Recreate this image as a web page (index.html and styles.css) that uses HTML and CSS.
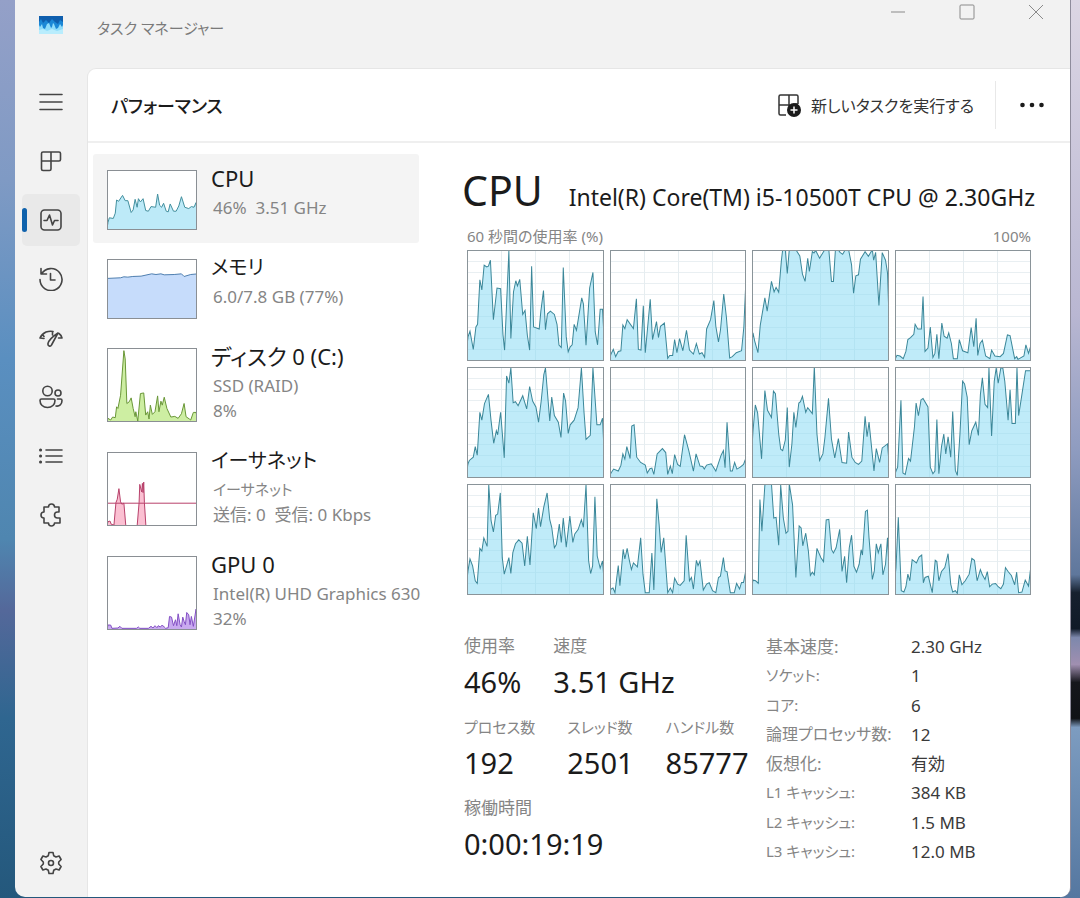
FILE: index.html
```
<!DOCTYPE html>
<html lang="ja">
<head>
  <meta charset="UTF-8">
  <meta name="viewport" content="width=device-width, initial-scale=1">
  <title>タスク マネージャー</title>
  <link rel="stylesheet" href="styles.css">
</head>
<body>
  <div class="window">
    <header class="titlebar">
      <svg class="app-icon" viewBox="0 0 24 18">
        <rect width="24" height="18" fill="#8fdcfb"/>
        <path d="M0 0h24v9l-1 2-2-3-2 4-2 1-2-5-1-1-1 4-1 1-2-5-2 1-2 5-2-1-1-4-2 3-1-2z" fill="#1b87d6"/>
        <path d="M0 0h24v6l-3-2-2 4-3-2-3-3-3 4-3-3-3 3-2-4-2 3z" fill="#0f5fae"/>
        <path d="M0 14l4-1 4 2 5-2 5 2 6-2v5H0z" fill="#b9edfd"/>
      </svg>
      <span class="app-title">タスク マネージャー</span>
      <div class="window-controls">
        <button aria-label="最小化"><svg viewBox="0 0 16 16"><path d="M1 8h14"/></svg></button>
        <button aria-label="最大化"><svg viewBox="0 0 16 16"><rect x="1" y="1" width="14" height="14" rx="1"/></svg></button>
        <button aria-label="閉じる"><svg viewBox="0 0 16 16"><path d="M1 1l14 14M15 1L1 15"/></svg></button>
      </div>
    </header>

    <div class="body">
      <nav class="sidebar">
        <button aria-label="メニュー"><svg viewBox="0 0 24 24"><path d="M1 4.500h22M1 12h22M1 19.500h22"/></svg></button>
        <button aria-label="プロセス"><svg viewBox="0 0 24 24"><path d="M4 3h16a1.500 1.500 0 0 1 1.500 1.500v6A1.500 1.500 0 0 1 20 12H2.500V4.500A1.500 1.500 0 0 1 4 3zM12 3v17a1.500 1.500 0 0 1-1.500 1.500H4A1.500 1.500 0 0 1 2.500 20v-8"/></svg></button>
        <button class="active" aria-label="パフォーマンス"><svg viewBox="0 0 24 24"><rect x="2" y="2" width="20" height="20" rx="3.500"/><path d="M5 12.500h3l2.500-5.500 3 10 2-4.500H19"/></svg></button>
        <button aria-label="アプリの履歴"><svg viewBox="0 0 24 24"><path d="M2 1.500V7h5.500M2.500 7A11 11 0 1 1 1 12.500M11.500 6.500V13H16"/></svg></button>
        <button aria-label="スタートアップ アプリ"><svg viewBox="0 0 24 24"><path d="M1 12c1-2.500 3-4.500 6-6 3-1 5-1 7-.5M1 12l4 .5M3.500 8.500l1.500 2M13.500 6v3M23 12c-.5-2-1.500-3.500-3-4.500M23 12h-3.500M19 7L12.500 19c-1 2-4 1-3.500-1.500C9.500 15 13 11 19 7z"/></svg></button>
        <button aria-label="ユーザー"><svg viewBox="0 0 24 24"><circle cx="8.500" cy="6" r="4.700"/><circle cx="19" cy="8" r="3"/><path d="M2.500 14h12a1.500 1.500 0 0 1 1.500 1.500c0 4-3 7-7.500 7S1 19.500 1 15.500A1.500 1.500 0 0 1 2.500 14zM18.500 14h3a1.500 1.500 0 0 1 1.500 1.500c0 4-2.500 6-6 5.500"/></svg></button>
        <button aria-label="詳細"><svg viewBox="0 0 24 24"><path d="M7 6h16M7 12h16M7 18h16"/><path class="dots" d="M1.500 6h.1M1.500 12h.1M1.500 18h.1"/></svg></button>
        <button aria-label="サービス"><svg viewBox="0 0 24 24"><path d="M5 4h4.500a3 3 0 0 1 6 0H20v5h-1.500a3 3 0 0 0 0 6H21v5h-5.500a3 3 0 0 1-6 0H5v-5a3 3 0 0 1 0-6z"/></svg></button>
        <button class="settings" aria-label="設定"><svg viewBox="0 0 24 24"><circle cx="12" cy="12" r="2.500"/><path d="M10 1.500h4l.7 3.200 2.300 1.300 3.100-1 2 3.500L19.700 11v2l2.400 2.500-2 3.500-3.100-1-2.300 1.300-.7 3.200h-4l-.7-3.200L7 18l-3.100 1-2-3.500L4.300 13v-2L1.900 8.500l2-3.500L7 6l2.300-1.300z"/></svg></button>
      </nav>

      <main class="content">
        <div class="page-header">
          <h1>パフォーマンス</h1>
          <button class="run-task">
            <svg viewBox="0 0 24 24">
              <path d="M12 2v11M2 12h11M21 11V3.500A1.500 1.500 0 0 0 19.500 2h-16A1.500 1.500 0 0 0 2 3.500v17A1.500 1.500 0 0 0 3.500 22H9M21 11h-3"/>
              <circle cx="17" cy="17" r="7" fill="#1b1b1b" stroke="none"/>
              <path d="M17 13.500v7M13.500 17h7" stroke="#fff"/>
            </svg>
            新しいタスクを実行する
          </button>
          <button class="more" aria-label="その他"><svg viewBox="0 0 24 24"><circle cx="2.500" cy="12" r="2.300"/><circle cx="12" cy="12" r="2.300"/><circle cx="21.500" cy="12" r="2.300"/></svg></button>
        </div>

        <div class="panes">
          <ul class="resources">
            <li class="resource selected">
              <svg class="thumb cpu" viewBox="0 0 266 176" preserveAspectRatio="none"><polygon points="-5,186 0,156 4,142 16,144 22,128 26,88 32,92 44,74 52,90 60,90 70,126 76,118 82,86 88,110 92,84 98,94 106,84 114,120 122,122 130,108 144,110 150,70 156,104 162,110 168,98 176,122 182,124 188,100 198,122 206,122 214,106 222,78 232,110 244,114 252,108 260,110 266,96 276,186"/></svg>
              <div class="info">
                <h2>CPU</h2>
                <p>46%&nbsp; 3.51 GHz</p>
              </div>
            </li>
            <li class="resource">
              <svg class="thumb memory" viewBox="0 0 266 176" preserveAspectRatio="none"><polygon points="-5,186 -5,56 38,54 48,51 60,52 75,50 100,49 132,42 145,44 160,42 170,45 200,44 222,42 230,50 250,44 272,42 276,186"/></svg>
              <div class="info">
                <h2 class="kana">メモリ</h2>
                <p>6.0/7.8 GB (77%)</p>
              </div>
            </li>
            <li class="resource">
              <svg class="thumb tall disk" viewBox="0 0 266 218" preserveAspectRatio="none"><polygon points="-5,228 0,210 8,215 14,206 22,208 26,175 30,180 38,140 48,5 52,30 57,165 64,160 70,148 76,180 82,205 84,190 90,218 98,135 108,133 114,200 120,190 124,212 128,170 134,198 142,190 150,142 154,190 160,158 164,170 170,146 178,180 190,206 202,204 212,210 222,196 230,165 236,205 246,212 250,215 258,192 266,192 276,228"/></svg>
              <div class="info">
                <h2>ディスク 0 (C:)</h2>
                <p>SSD (RAID)</p>
                <p>8%</p>
              </div>
            </li>
            <li class="resource">
              <svg class="thumb tall network" viewBox="0 0 266 218" preserveAspectRatio="none"><polygon points="-5,228 0,208 6,206 10,216 18,218 24,150 28,140 33,108 38,148 42,155 48,152 54,222 88,222 94,150 96,95 102,118 104,92 106,120 108,88 110,150 115,228"/><path d="M0 152H266"/></svg>
              <div class="info">
                <h2 class="kana">イーサネット</h2>
                <p class="kana">イーサネット</p>
                <p>送信: 0&nbsp; 受信: 0 Kbps</p>
              </div>
            </li>
            <li class="resource">
              <svg class="thumb tall gpu" viewBox="0 0 266 218" preserveAspectRatio="none"><polygon points="-5,228 0,206 8,206 12,216 30,215 36,210 42,216 86,216 92,212 96,216 122,216 130,210 136,215 142,208 148,214 152,208 158,212 164,206 170,212 174,216 182,214 186,180 192,182 198,208 204,190 208,208 212,172 218,205 222,212 226,182 230,195 234,205 238,168 244,175 248,205 252,180 258,210 266,158 276,228"/></svg>
              <div class="info">
                <h2>GPU 0</h2>
                <p>Intel(R) UHD Graphics 630</p>
                <p>32%</p>
              </div>
            </li>
          </ul>

          <section class="details">
            <div class="details-title">
              <h2>CPU</h2>
              <span>Intel(R) Core(TM) i5-10500T CPU @ 2.30GHz</span>
            </div>
            <div class="axis">
              <span>60 秒間の使用率 (%)</span>
              <span>100%</span>
            </div>

            <!-- 論理プロセッサごとのグラフ -->
            <div class="cores">
              <svg viewBox="0 0 408 330" preserveAspectRatio="none"><polygon points="-9,340 0,260 6,243 16,298 24,230 29,222 36,87 42,118 49,43 57,48 62,46 68,28 77,208 88,112 99,114 106,252 111,300 124,0 130,265 138,124 145,90 150,106 157,86 166,192 173,180 180,255 187,300 193,46 199,230 216,236 221,182 229,120 235,238 241,190 250,182 262,192 270,222 276,285 283,292 289,50 298,260 304,305 310,290 316,284 322,222 329,240 338,185 345,142 350,160 358,285 369,112 379,65 386,245 393,284 401,176 408,176 417,340"/></svg>
              <svg viewBox="0 0 408 330" preserveAspectRatio="none"><polygon points="-9,340 0,312 7,298 14,320 22,304 30,302 36,224 42,235 49,208 68,235 77,145 83,298 91,300 98,166 104,308 119,146 126,268 138,214 144,262 150,228 162,218 172,325 178,316 187,316 193,268 200,308 208,265 218,302 229,240 238,300 250,312 259,280 268,312 276,308 284,322 290,236 302,208 312,150 318,228 326,275 332,240 342,130 350,200 360,324 368,320 380,308 396,302 403,230 408,116 417,340"/></svg>
              <svg viewBox="0 0 408 330" preserveAspectRatio="none"><polygon points="-9,340 0,248 5,272 15,308 22,225 36,142 43,182 56,92 64,124 70,110 78,125 86,30 90,-4 98,-4 104,68 110,-4 130,-4 142,15 150,70 158,92 166,22 171,62 180,2 185,6 190,-2 202,22 212,5 218,-4 230,-4 238,92 244,92 250,-4 258,-4 264,4 272,10 280,-4 290,-4 299,42 305,128 312,75 320,72 326,25 340,2 350,16 362,-4 366,28 372,4 382,165 392,5 402,28 408,66 417,340"/></svg>
              <svg viewBox="0 0 408 330" preserveAspectRatio="none"><polygon points="-9,340 0,322 3,316 12,318 22,326 30,304 36,268 44,262 54,252 58,222 66,236 77,236 82,138 88,304 97,294 104,230 112,322 118,310 124,252 130,326 139,218 146,258 155,264 160,248 168,280 174,326 186,326 192,268 202,302 218,308 228,232 236,290 243,204 248,316 255,280 262,270 272,318 285,326 290,300 300,318 316,320 326,310 338,254 346,256 360,326 366,320 370,328 388,318 394,284 402,310 408,290 417,340"/></svg>
              <svg viewBox="0 0 408 330" preserveAspectRatio="none"><polygon points="-9,340 0,290 4,280 16,270 22,238 28,264 36,134 42,158 50,108 62,80 70,160 78,228 86,190 90,202 99,134 110,272 117,24 124,46 130,0 137,105 144,102 152,114 166,84 178,124 187,56 196,100 206,118 214,164 222,100 230,20 235,0 248,160 254,88 262,144 274,164 282,210 290,76 296,100 304,198 310,172 322,158 334,120 344,0 352,135 358,216 371,204 379,0 391,172 401,172 408,152 417,340"/></svg>
              <svg viewBox="0 0 408 330" preserveAspectRatio="none"><polygon points="-9,340 0,318 8,306 22,312 30,295 36,260 42,276 48,238 58,274 63,176 70,172 78,270 90,286 104,294 110,318 118,305 124,303 130,322 140,260 156,244 166,256 172,322 180,297 186,320 193,262 202,292 210,298 223,202 236,250 250,312 258,260 270,297 278,298 283,306 290,294 304,290 318,312 334,264 341,250 346,302 352,164 362,312 368,312 375,286 382,306 392,300 402,292 408,276 417,340"/></svg>
              <svg viewBox="0 0 408 330" preserveAspectRatio="none"><polygon points="-9,340 0,190 7,112 14,136 26,275 36,68 44,128 56,150 62,70 68,78 78,200 84,246 90,250 98,218 104,120 110,300 118,230 124,134 130,180 139,106 144,102 150,86 160,134 166,120 180,138 186,-4 194,200 202,280 212,260 218,212 229,92 238,215 248,272 259,214 270,286 284,288 290,194 300,270 310,286 320,292 330,282 340,146 346,208 352,164 367,312 374,244 384,286 392,242 408,230 417,340"/></svg>
              <svg viewBox="0 0 408 330" preserveAspectRatio="none"><polygon points="-9,340 0,312 5,300 15,98 21,318 28,322 38,274 44,282 56,178 61,106 68,144 76,96 82,92 97,118 104,300 112,320 118,312 124,156 130,320 138,238 145,200 151,260 158,208 166,270 172,132 180,310 186,325 194,200 202,40 208,48 216,88 222,232 230,190 242,164 250,204 256,80 262,30 270,110 278,120 282,0 290,206 298,40 304,0 310,46 318,0 324,0 330,40 340,158 346,66 352,168 362,168 367,0 372,144 382,80 393,8 408,8 417,340"/></svg>
              <svg viewBox="0 0 408 330" preserveAspectRatio="none"><polygon points="-9,340 0,260 6,224 14,245 22,290 28,298 36,192 42,200 48,160 58,186 63,0 70,108 77,142 84,92 90,88 98,24 104,220 110,270 124,220 130,268 136,205 144,178 154,166 164,176 172,245 180,155 188,242 198,84 207,132 214,70 220,126 230,66 240,24 248,105 254,128 262,190 268,180 277,118 283,174 289,100 298,188 309,94 318,174 324,148 334,135 344,105 350,128 358,0 366,230 372,268 378,245 385,36 392,215 401,252 408,230 417,340"/></svg>
              <svg viewBox="0 0 408 330" preserveAspectRatio="none"><polygon points="-9,340 0,315 6,312 12,326 22,244 27,305 37,195 42,224 49,192 56,230 62,256 68,236 80,248 90,160 97,270 104,326 116,326 124,206 130,318 139,42 146,120 152,204 160,160 172,326 180,312 187,326 193,282 202,300 210,304 222,290 228,152 238,290 244,280 250,315 259,228 264,244 270,230 280,318 290,300 298,296 308,320 318,326 326,280 332,276 341,220 346,260 352,262 362,326 374,326 381,298 390,315 396,295 402,295 408,264 417,340"/></svg>
              <svg viewBox="0 0 408 330" preserveAspectRatio="none"><polygon points="-9,340 0,288 8,290 16,298 21,44 27,140 36,0 42,-4 56,-4 63,100 70,98 78,182 84,0 92,100 100,146 106,140 110,-4 120,60 130,280 140,124 146,130 151,184 160,146 168,200 174,274 180,264 186,272 194,192 206,220 214,232 222,106 230,104 238,195 244,206 252,190 263,134 270,262 278,216 284,296 292,190 299,152 306,246 314,264 322,240 328,196 332,212 341,80 347,76 352,160 362,286 368,260 374,178 380,205 388,178 394,272 402,240 408,160 417,340"/></svg>
              <svg viewBox="0 0 408 330" preserveAspectRatio="none"><polygon points="-9,340 0,250 7,98 16,320 24,324 30,308 36,270 42,290 49,226 62,236 70,218 78,212 83,296 88,280 98,276 110,326 119,228 124,232 130,290 138,262 148,250 158,208 166,300 172,324 180,320 186,328 192,272 200,302 210,290 222,270 230,222 238,228 246,290 256,256 262,272 270,286 277,262 284,308 292,300 302,298 310,308 318,314 326,300 332,250 340,262 350,274 360,302 366,264 372,326 382,324 392,288 402,306 408,255 417,340"/></svg>
            </div>

            <div class="stats">
              <div class="live">
                <dl>
                  <div><dt>使用率</dt><dd>46%</dd></div>
                  <div><dt>速度</dt><dd>3.51 GHz</dd></div>
                </dl>
                <dl>
                  <div><dt class="kana">プロセス数</dt><dd>192</dd></div>
                  <div><dt class="kana">スレッド数</dt><dd>2501</dd></div>
                  <div><dt class="kana">ハンドル数</dt><dd>85777</dd></div>
                </dl>
                <dl>
                  <div><dt>稼働時間</dt><dd>0:00:19:19</dd></div>
                </dl>
              </div>
              <table class="specs">
                <tr><th>基本速度:</th><td>2.30 GHz</td></tr>
                <tr><th class="kana">ソケット:</th><td>1</td></tr>
                <tr><th class="kana">コア:</th><td>6</td></tr>
                <tr><th class="mixed">論理プロセッサ数:</th><td>12</td></tr>
                <tr><th>仮想化:</th><td>有効</td></tr>
                <tr><th class="kana">L1 キャッシュ:</th><td>384 KB</td></tr>
                <tr><th class="kana">L2 キャッシュ:</th><td>1.5 MB</td></tr>
                <tr><th class="kana">L3 キャッシュ:</th><td>12.0 MB</td></tr>
              </table>
            </div>
          </section>
        </div>
      </main>
    </div>
  </div>
</body>
</html>
```
FILE: styles.css
```
* {
  box-sizing: border-box;
}
body {
  margin: 0;
  min-height: 100vh;
  display: flex;
  padding: 0 9px 1px 15px;
  font-family: 'Noto Sans', 'Noto Sans CJK JP', sans-serif;
  font-feature-settings: "palt";
  color: #1b1b1b;
  /* wallpaper strips on both sides of the window */
  background:
    linear-gradient(#dcd6e4, #b9b7d2 35%, #8f9cc0 50%, #5f779c 64%, #16202e 66%, #101a28 70%, #7d88ac 71%, #a08fb0 74%, #15161c 76%, #101216 80%, #7d9cc0 81%, #5577a0 100%) right / 20px 100% no-repeat,
    linear-gradient(#94a0c8, #7f9ac4 20%, #5a8fc0 40%, #4f86b0 60%, #54689a 68%, #2f6690 80%, #24587c 100%);
}
h1, h2, p, ul, dl, dd {
  margin: 0;
  padding: 0;
  font-weight: 400;
}
button {
  border: 0;
  padding: 0;
  background: none;
  font: inherit;
  color: inherit;
  font-feature-settings: inherit;
}
svg {
  display: block;
  fill: none;
}

.window {
  flex: 1;
  display: flex;
  flex-direction: column;
  background: #f2f2f2;
  border-right: 1px solid #8f8c9c;
  border-radius: 0 0 10px 10px;
  overflow: hidden;
}
.titlebar {
  display: flex;
  height: 68px;
  padding-left: 24px;
}
.app-icon {
  width: 24px;
  height: 18px;
  margin-top: 16px;
}
.app-title {
  margin: 14px auto 0 34px;
  font-size: 15px;
  line-height: 28px;
  color: #7a7a7a;
}
.window-controls {
  display: flex;
}
.window-controls button {
  width: 69px;
  height: 24px;
  display: grid;
  place-items: center;
}
.window-controls svg {
  width: 16px;
  height: 16px;
  stroke: #8a8a8a;
}

.body {
  flex: 1;
  display: flex;
}
.sidebar {
  width: 72px;
  padding: 8px 7px;
  display: flex;
  flex-direction: column;
  gap: 7px;
}
.sidebar button {
  position: relative;
  width: 58px;
  height: 52px;
  display: grid;
  place-items: center;
  border-radius: 5px;
}
.sidebar svg {
  width: 24px;
  height: 24px;
  stroke: #444;
  stroke-width: 1.6;
  stroke-linejoin: round;
  stroke-linecap: round;
}
.sidebar .dots {
  stroke-width: 3;
}
.sidebar .active {
  background: #e9e9e9;
}
.sidebar .active::before {
  content: "";
  position: absolute;
  left: 0;
  top: 14px;
  width: 5px;
  height: 24px;
  border-radius: 3px;
  background: #0f62ac;
}
.sidebar .settings {
  margin-top: auto;
}

.content {
  flex: 1;
  background: #fff;
  border-top: 1px solid #e6e6e6;
  border-left: 1px solid #e6e6e6;
  border-radius: 9px 0 0 0;
}
.page-header {
  display: flex;
  align-items: center;
  height: 74px;
  padding-left: 23px;
  border-bottom: 2px solid #efefef;
}
.page-header h1 {
  margin-right: auto;
  font-size: 18px;
  font-weight: 500;
}
.run-task {
  display: flex;
  align-items: center;
  gap: 10px;
  margin-right: 21px;
  font-size: 16px;
  color: #333;
}
.run-task svg {
  width: 24px;
  height: 24px;
  stroke: #333;
  stroke-width: 1.5;
}
.more {
  height: 48px;
  padding: 0 26px 0 24px;
  border-left: 1px solid #e8e8e8;
}
.more svg {
  width: 24px;
  height: 24px;
  fill: #1b1b1b;
}

.panes {
  display: flex;
  gap: 43px;
}
.resources {
  width: 331px;
  padding: 11px 0 0 5px;
  list-style: none;
}
.resource {
  display: flex;
  gap: 14px;
  padding: 10px 0 13px 14px;
}
.resource.selected {
  background: #f4f4f4;
  border-radius: 3px;
}
.thumb {
  flex: none;
  width: 90px;
  height: 60px;
  margin-top: 6px;
  border: 1px solid #8a8f94;
  background: #fff;
}
.thumb.tall {
  height: 74px;
}
.thumb > * {
  vector-effect: non-scaling-stroke;
}
.cpu {
  fill: #bdeaf8;
  stroke: #43909f;
}
.memory {
  fill: #c6dcfb;
  stroke: #4f7fb0;
}
.disk {
  fill: #cdeea2;
  stroke: #6a9738;
}
.network {
  fill: #fbc0d2;
  stroke: #b8416b;
}
.gpu {
  fill: #c9aaf0;
  stroke: #8350c4;
}
.info {
  white-space: nowrap;
}
.info h2 {
  margin-bottom: 2px;
  font-size: 22px;
  line-height: 29px;
}
.info h2.kana {
  font-size: 20px;
}
.info p {
  padding-left: 2px;
  font-size: 17px;
  line-height: 25px;
  color: #858585;
}
.info p.kana {
  font-size: 15px;
}

.details {
  flex: 1;
  min-width: 0;
  padding: 17px 35px 0 0;
}
.details-title {
  display: flex;
  align-items: baseline;
  justify-content: space-between;
  white-space: nowrap;
}
.details-title h2 {
  font-size: 41px;
  line-height: 60px;
}
.details-title span {
  font-size: 23px;
}
.axis {
  display: flex;
  justify-content: space-between;
  padding: 4px 4px 0 5px;
  font-size: 15px;
  line-height: 24px;
  color: #858585;
}
.cores {
  display: grid;
  grid-template-columns: repeat(4, 1fr);
  gap: 6px;
  padding: 2px 4px 0 5px;
}
.cores svg {
  width: 100%;
  height: 111px;
  border: 1px solid #8a9499;
  fill: #87d9f488;
  stroke: #3b8799;
  background:
    repeating-linear-gradient(90deg, transparent 0 33px, #e6edf0 33px 34px),
    repeating-linear-gradient(transparent 0 10px, #e9eff2 10px 11px);
}
.cores polygon {
  vector-effect: non-scaling-stroke;
}

.stats {
  display: grid;
  grid-template-columns: 302px 1fr;
  margin-top: 37px;
  padding: 0 4px 20px 2px;
  white-space: nowrap;
}
.live {
  display: flex;
  flex-direction: column;
  gap: 9px;
}
.live dl {
  display: flex;
  gap: 32px;
}
.live dt {
  font-size: 17px;
  line-height: 28px;
  color: #858585;
}
.live dt.kana {
  font-size: 15px;
}
.live dd {
  font-size: 29px;
  line-height: 44px;
}
.specs {
  border-collapse: collapse;
  align-self: stretch;
  font-size: 17px;
  line-height: 29px;
}
.specs th {
  width: 145px;
  padding: 0;
  font-weight: 400;
  text-align: left;
  color: #858585;
}
.specs th.kana {
  font-size: 15px;
}
.specs th.mixed {
  font-size: 16px;
}
.specs td {
  padding: 0;
  color: #3a3a3a;
}
```
